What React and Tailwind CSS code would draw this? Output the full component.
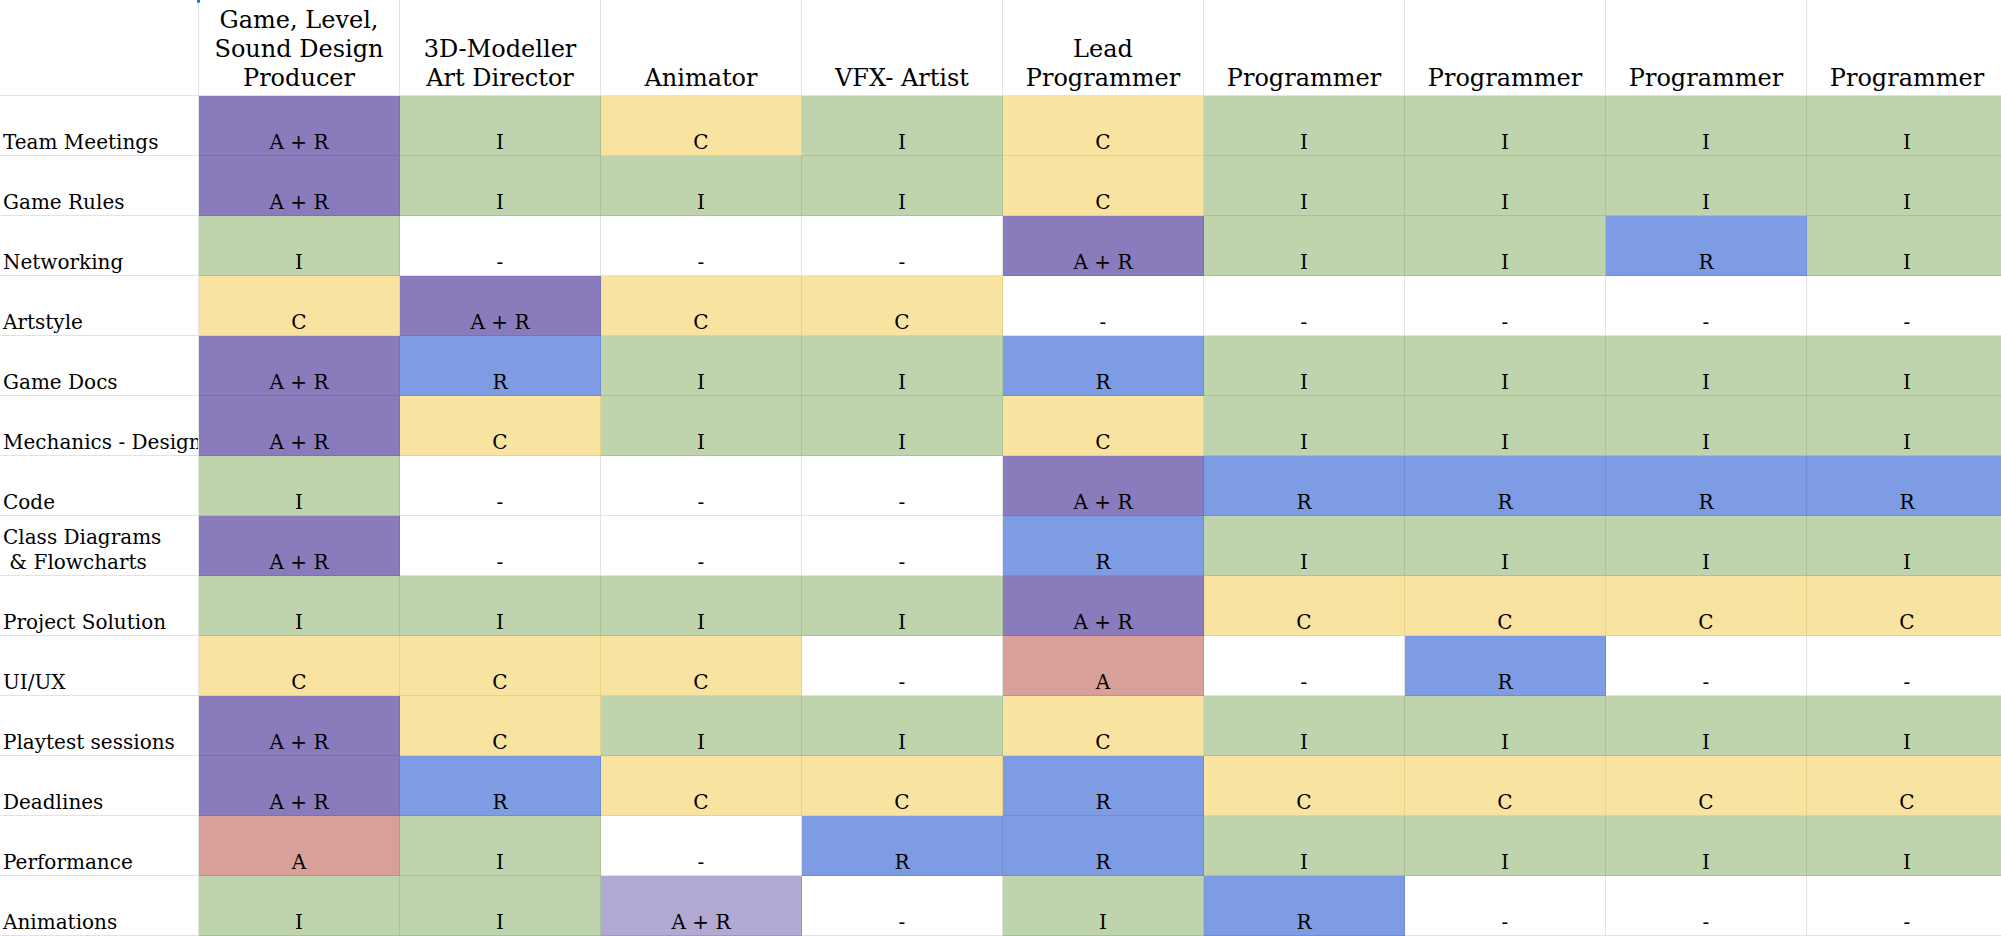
import React from "react";

const FONT = { fontFamily: "'DejaVu Serif', 'Liberation Serif', serif" };

// cell colour -> background + grid line
const TONES = {
  P: "bg-[#8a7cbc] border-[#7d70ad]",
  L: "bg-[#b1a9d3] border-[#9f97c2]",
  G: "bg-[#bfd4ad] border-[#a8c196]",
  Y: "bg-[#f8e4a0] border-[#e8d18a]",
  B: "bg-[#7d9ce3] border-[#6e8dd3]",
  R: "bg-[#d9a099] border-[#c78c85]",
  W: "bg-white border-[#e2e2e2]",
};

const HEADERS = [
  ["Game, Level,", "Sound Design", "Producer"],
  ["3D-Modeller", "Art Director"],
  ["Animator"],
  ["VFX- Artist"],
  ["Lead", "Programmer"],
  ["Programmer"],
  ["Programmer"],
  ["Programmer"],
  ["Programmer"],
];

// [label, [value, tone] x 9]
const ROWS = [
  [["Team Meetings"], ["A + R", "P"], ["I", "G"], ["C", "Y"], ["I", "G"], ["C", "Y"], ["I", "G"], ["I", "G"], ["I", "G"], ["I", "G"]],
  [["Game Rules"], ["A + R", "P"], ["I", "G"], ["I", "G"], ["I", "G"], ["C", "Y"], ["I", "G"], ["I", "G"], ["I", "G"], ["I", "G"]],
  [["Networking"], ["I", "G"], ["-", "W"], ["-", "W"], ["-", "W"], ["A + R", "P"], ["I", "G"], ["I", "G"], ["R", "B"], ["I", "G"]],
  [["Artstyle"], ["C", "Y"], ["A + R", "P"], ["C", "Y"], ["C", "Y"], ["-", "W"], ["-", "W"], ["-", "W"], ["-", "W"], ["-", "W"]],
  [["Game Docs"], ["A + R", "P"], ["R", "B"], ["I", "G"], ["I", "G"], ["R", "B"], ["I", "G"], ["I", "G"], ["I", "G"], ["I", "G"]],
  [["Mechanics - Design"], ["A + R", "P"], ["C", "Y"], ["I", "G"], ["I", "G"], ["C", "Y"], ["I", "G"], ["I", "G"], ["I", "G"], ["I", "G"]],
  [["Code"], ["I", "G"], ["-", "W"], ["-", "W"], ["-", "W"], ["A + R", "P"], ["R", "B"], ["R", "B"], ["R", "B"], ["R", "B"]],
  [["Class Diagrams", "\u00a0& Flowcharts"], ["A + R", "P"], ["-", "W"], ["-", "W"], ["-", "W"], ["R", "B"], ["I", "G"], ["I", "G"], ["I", "G"], ["I", "G"]],
  [["Project Solution"], ["I", "G"], ["I", "G"], ["I", "G"], ["I", "G"], ["A + R", "P"], ["C", "Y"], ["C", "Y"], ["C", "Y"], ["C", "Y"]],
  [["UI/UX"], ["C", "Y"], ["C", "Y"], ["C", "Y"], ["-", "W"], ["A", "R"], ["-", "W"], ["R", "B"], ["-", "W"], ["-", "W"]],
  [["Playtest sessions"], ["A + R", "P"], ["C", "Y"], ["I", "G"], ["I", "G"], ["C", "Y"], ["I", "G"], ["I", "G"], ["I", "G"], ["I", "G"]],
  [["Deadlines"], ["A + R", "P"], ["R", "B"], ["C", "Y"], ["C", "Y"], ["R", "B"], ["C", "Y"], ["C", "Y"], ["C", "Y"], ["C", "Y"]],
  [["Performance"], ["A", "R"], ["I", "G"], ["-", "W"], ["R", "B"], ["R", "B"], ["I", "G"], ["I", "G"], ["I", "G"], ["I", "G"]],
  [["Animations"], ["I", "G"], ["I", "G"], ["A + R", "L"], ["-", "W"], ["I", "G"], ["R", "B"], ["-", "W"], ["-", "W"], ["-", "W"]],
];

const HeaderCell = ({ lines }) => (
  <div className="h-[96px] border-r border-b border-[#e2e2e2] flex flex-col items-center justify-end pb-[2px] text-[24px] leading-[29px] text-black text-center">
    {lines.map((l, i) => (
      <span key={i} className="whitespace-nowrap">{l}</span>
    ))}
  </div>
);

const LabelCell = ({ lines }) => (
  <div className="h-[60px] border-r border-b border-[#e2e2e2] bg-white flex flex-col justify-end pl-[3px] text-[20px] leading-[25px] text-black overflow-hidden">
    {lines.map((l, i) => (
      <span key={i} className="whitespace-nowrap">{l}</span>
    ))}
  </div>
);

const Cell = ({ value, tone }) => (
  <div className={`h-[60px] border-r border-b flex items-end justify-center text-[20px] leading-[25px] text-black ${TONES[tone]}`}>
    {value}
  </div>
);

export default function App() {
  return (
    <div className="relative w-[2001px] h-[936px] overflow-hidden bg-white" style={FONT}>
      <div className="grid grid-cols-[199px_repeat(9,201px)]">
        <HeaderCell lines={[""]} />
        {HEADERS.map((h, i) => (
          <HeaderCell key={i} lines={h} />
        ))}
        {ROWS.map(([label, ...cells], r) => (
          <React.Fragment key={r}>
            <LabelCell lines={label} />
            {cells.map(([v, t], c) => (
              <Cell key={c} value={v} tone={t} />
            ))}
          </React.Fragment>
        ))}
      </div>
      {/* selection handle peeking in at the top */}
      <div className="absolute left-[197px] top-0 w-[3px] h-[3px] bg-[#1a73e8] rounded-b-sm" />
    </div>
  );
}
